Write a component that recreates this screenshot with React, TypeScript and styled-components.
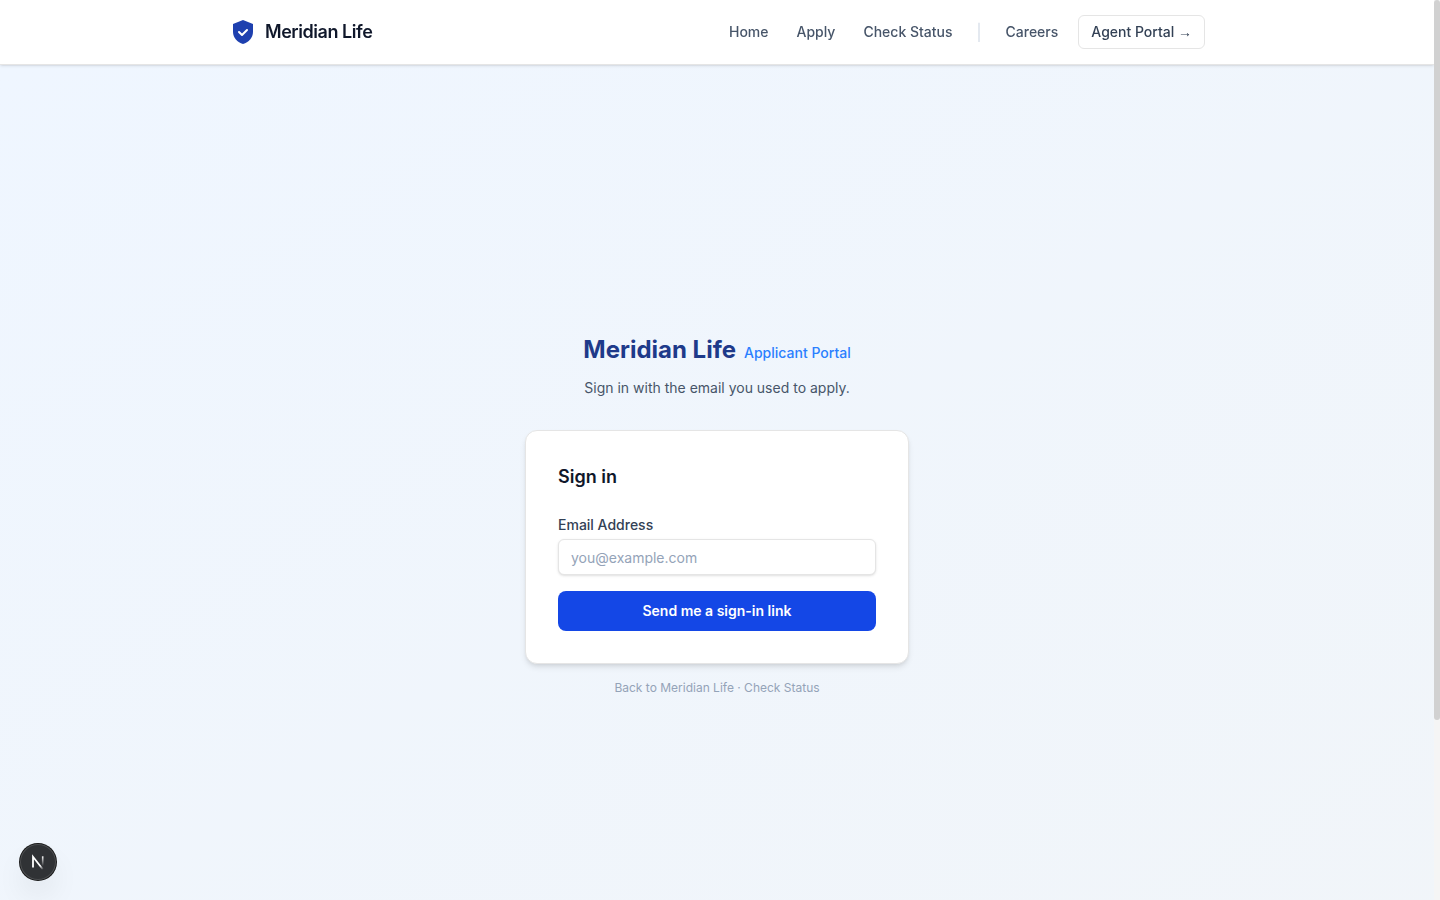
import React from "react";
import styled, { createGlobalStyle } from "styled-components";

const GlobalStyle = createGlobalStyle`
  *, *::before, *::after { box-sizing: border-box; }
  body {
    margin: 0;
    font-family: Inter, "Liberation Sans", sans-serif;
    font-size: 14px;
    line-height: 20px;
    color: #0f172a;
  }
  a { color: inherit; text-decoration: none; }
`;

const Shell = styled.div`
  display: grid;
  grid-template-columns: minmax(0, 1fr) 6px;
  height: 100vh;
`;

const Viewport = styled.div`
  overflow-y: auto;
  scrollbar-width: none;
  background: #f0f4f8;
`;

const ScrollTrack = styled.div`
  background: #f5f5f5;
`;

const ScrollThumb = styled.div`
  height: 80%;
  border-radius: 3px;
  background: #d1d1d1;
`;

const Header = styled.header`
  position: sticky;
  top: 0;
  z-index: 10;
  background: #fff;
  border-bottom: 1px solid #e5e5e5;
  box-shadow: 0 1px 3px rgba(0, 0, 0, 0.1), 0 1px 2px -1px rgba(0, 0, 0, 0.1);
`;

const HeaderInner = styled.div`
  display: flex;
  align-items: center;
  justify-content: space-between;
  max-width: 1024px;
  height: 64px;
  margin: 0 auto;
  padding: 0 24px;
`;

const Brand = styled.a`
  display: flex;
  align-items: center;
  gap: 8px;
  font-size: 18px;
  line-height: 28px;
  font-weight: 600;
  letter-spacing: -0.025em;
`;

const Nav = styled.nav`
  display: flex;
  align-items: center;
  gap: 4px;
`;

const NavLink = styled.a`
  padding: 6px 12px;
  border-radius: 6px;
  font-weight: 500;
  color: #475569;
`;

const Divider = styled.span`
  margin: 0 8px;
  font-size: 16px;
  font-weight: 300;
  color: #cbd5e1;
`;

const PortalLink = styled.a`
  margin-left: 4px;
  padding: 6px 12px;
  border: 1px solid #e5e5e5;
  border-radius: 6px;
  font-weight: 500;
  color: #334155;
`;

const Arrow = styled.span`
  font-family: "Liberation Sans", sans-serif;
  line-height: 1;
`;

const Main = styled.main`
  display: flex;
  align-items: center;
  justify-content: center;
  min-height: 100vh;
  padding: 16px;
  background: linear-gradient(to bottom right, #eff6ff, #f1f5f9);
`;

const Panel = styled.div`
  width: 100%;
  max-width: 384px;
`;

const Intro = styled.div`
  margin-bottom: 32px;
  text-align: center;
`;

const Title = styled.h1`
  margin: 0;
  font-size: 24px;
  line-height: 32px;
  font-weight: 700;
  color: #1e3a8a;
`;

const PortalName = styled.span`
  margin-left: 8px;
  font-size: 14px;
  line-height: 20px;
  font-weight: 500;
  color: #2b7fff;
`;

const Lead = styled.p`
  margin: 12px 0 0;
  color: #475569;
`;

const Card = styled.section`
  padding: 32px;
  background: #fff;
  border: 1px solid #e5e5e5;
  border-radius: 12px;
  box-shadow: 0 4px 6px -1px rgba(0, 0, 0, 0.1), 0 2px 4px -2px rgba(0, 0, 0, 0.1);
`;

const CardTitle = styled.h2`
  margin: 0 0 24px;
  font-size: 18px;
  line-height: 28px;
  font-weight: 600;
`;

const Form = styled.form`
  display: flex;
  flex-direction: column;
`;

const Label = styled.label`
  margin-bottom: 4px;
  font-weight: 500;
  color: #334155;
`;

const Input = styled.input`
  height: 36px;
  margin: 0 0 16px;
  padding: 0 12px;
  border: 1px solid #e5e5e5;
  border-radius: 6px;
  background: #fff;
  box-shadow: 0 1px 3px rgba(0, 0, 0, 0.1), 0 1px 2px -1px rgba(0, 0, 0, 0.1);
  font: inherit;
  color: #0f172a;

  &::placeholder { color: #94a3b8; opacity: 1; }
`;

const Submit = styled.button`
  height: 40px;
  border: 0;
  border-radius: 8px;
  background: #1447e6;
  font: inherit;
  font-weight: 600;
  color: #fff;
  cursor: pointer;
`;

const FootLinks = styled.p`
  margin: 16px 0 0;
  font-size: 12px;
  line-height: 16px;
  text-align: center;
  color: #94a3b8;
`;

const PageEnd = styled.footer`
  height: 159px;
`;

const DevButton = styled.button`
  position: fixed;
  left: 20px;
  bottom: 20px;
  display: flex;
  align-items: center;
  justify-content: center;
  width: 36px;
  height: 36px;
  padding: 0;
  border: 0;
  border-radius: 50%;
  background: #303235;
  box-shadow: 0 0 0 1px #171717, inset 0 0 0 1px rgba(255, 255, 255, 0.14), 0 16px 32px -8px rgba(0, 0, 0, 0.2);
  cursor: pointer;
`;

const ShieldIcon = () => (
  <svg width="28" height="28" viewBox="0 0 28 28" fill="none" aria-hidden="true">
    <path d="M14 2L4 6v8c0 5.5 4.3 10.7 10 12 5.700-1.300 10-6.500 10-12V6L14 2z" fill="#1e40af" />
    <path d="M10 14l3 3 5-5" stroke="#fff" strokeWidth="2" strokeLinecap="round" strokeLinejoin="round" />
  </svg>
);

const NextIcon = () => (
  <svg width="36" height="36" viewBox="0 0 36 36" fill="none" aria-hidden="true">
    <defs>
      <linearGradient id="diagonal" x1="18" y1="18" x2="23" y2="25" gradientUnits="userSpaceOnUse">
        <stop stopColor="#fff" />
        <stop offset="0.5" stopColor="#fff" />
        <stop offset="1" stopColor="#fff" stopOpacity="0.1" />
      </linearGradient>
      <linearGradient id="stem" x1="22" y1="12" x2="22" y2="22" gradientUnits="userSpaceOnUse">
        <stop stopColor="#fff" />
        <stop offset="1" stopColor="#fff" stopOpacity="0" />
      </linearGradient>
    </defs>
    <path d="M13 23.600V12.800L22.800 25.300" stroke="url(#diagonal)" strokeWidth="1.800" />
    <path d="M22.700 12.300V22" stroke="url(#stem)" strokeWidth="1.600" />
  </svg>
);

export default function App() {
  return (
    <>
      <GlobalStyle />
      <Shell>
        <Viewport>
          <Header>
            <HeaderInner>
              <Brand href="#home">
                <ShieldIcon />
                Meridian Life
              </Brand>
              <Nav>
                <NavLink href="#home">Home</NavLink>
                <NavLink href="#apply">Apply</NavLink>
                <NavLink href="#status">Check Status</NavLink>
                <Divider aria-hidden="true">|</Divider>
                <NavLink href="#careers">Careers</NavLink>
                <PortalLink href="#agents">
                  Agent Portal <Arrow>→</Arrow>
                </PortalLink>
              </Nav>
            </HeaderInner>
          </Header>
          <Main>
            <Panel>
              <Intro>
                <Title>
                  Meridian Life<PortalName>Applicant Portal</PortalName>
                </Title>
                <Lead>Sign in with the email you used to apply.</Lead>
              </Intro>
              <Card>
                <CardTitle>Sign in</CardTitle>
                <Form onSubmit={(e) => e.preventDefault()}>
                  <Label htmlFor="email">Email Address</Label>
                  <Input id="email" type="email" placeholder="you@example.com" />
                  <Submit type="submit">Send me a sign-in link</Submit>
                </Form>
              </Card>
              <FootLinks>
                <a href="#home">Back to Meridian Life</a> · <a href="#status">Check Status</a>
              </FootLinks>
            </Panel>
          </Main>
          <PageEnd />
        </Viewport>
        <ScrollTrack aria-hidden="true">
          <ScrollThumb />
        </ScrollTrack>
      </Shell>
      <DevButton type="button" aria-label="Open developer tools">
        <NextIcon />
      </DevButton>
    </>
  );
}
